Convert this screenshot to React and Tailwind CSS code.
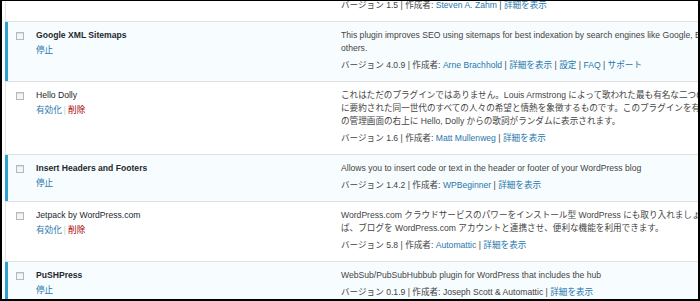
import React from 'react';

// WordPress plugin list, shown at roughly two thirds of its normal size
const plugins = [
  {
    name: "Google XML Sitemaps",
    active: true,
    desc: [
      "This plugin improves SEO using sitemaps for best indexation by search engines like Google, Bing, Yahoo and",
      "others.",
    ],
    version: "4.0.9",
    author: "Arne Brachhold",
    extra: ["設定", "FAQ", "サポート"],
  },
  {
    name: "Hello Dolly",
    active: false,
    desc: [
      "これはただのプラグインではありません。Louis Armstrong によって歌われた最も有名な二つの単語、Hello, Dolly",
      "に要約された同一世代のすべての人々の希望と情熱を象徴するものです。このプラグインを有効にすると、すべて",
      "の管理画面の右上に Hello, Dolly からの歌詞がランダムに表示されます。",
    ],
    version: "1.6",
    author: "Matt Mullenweg",
    extra: [],
  },
  {
    name: "Insert Headers and Footers",
    active: true,
    desc: ["Allows you to insert code or text in the header or footer of your WordPress blog"],
    version: "1.4.2",
    author: "WPBeginner",
    extra: [],
  },
  {
    name: "Jetpack by WordPress.com",
    active: false,
    desc: [
      "WordPress.com クラウドサービスのパワーをインストール型 WordPress にも取り入れましょう。Jetpack を使え",
      "ば、ブログを WordPress.com アカウントと連携させ、便利な機能を利用できます。",
    ],
    version: "5.8",
    author: "Automattic",
    extra: [],
  },
  {
    name: "PuSHPress",
    active: true,
    desc: ["WebSub/PubSubHubbub plugin for WordPress that includes the hub"],
    version: "0.1.9",
    author: "Joseph Scott & Automattic",
    authorPlain: true,
    extra: [],
  },
];

function VersionLine({ version, author, authorPlain, extra = [], className = "" }) {
  return (
    <p className={"whitespace-nowrap leading-[13px] text-[#444] " + className}>
      バージョン {version} | 作成者:{" "}
      {authorPlain ? (
        <span>{author}</span>
      ) : (
        <a className="text-[#1f77ad]">{author}</a>
      )}{" "}
      | <a className="text-[#1f77ad]">詳細を表示</a>
      {extra.map((e) => (
        <span key={e}>
          {" "}| <a className="text-[#1f77ad]">{e}</a>
        </span>
      ))}
    </p>
  );
}

function PluginRow({ p }) {
  return (
    <div
      className={
        "flex border-b border-[#e1e1e1] " +
        (p.active ? "bg-[#f7fcfe]" : "bg-white")
      }
    >
      <div
        className={
          "w-[24px] shrink-0 pl-[11px] pt-[10px] " +
          (p.active ? "shadow-[inset_3px_0_0_#2ea2cc]" : "shadow-[inset_1px_0_0_#e5e5e5]")
        }
      >
        <span className="block h-[8px] w-[8px] border border-[#b4b9be] bg-[#f6f6f6] shadow-[inset_0_1px_1px_rgba(0,0,0,0.1)]" />
      </div>
      <div className="w-[307px] shrink-0 pl-[7px] pt-[7px]">
        <div
          className={
            "leading-[13px] text-[#23282d] " + (p.active ? "font-bold" : "font-normal")
          }
        >
          {p.name}
        </div>
        <div className="mt-[2px] leading-[13px]">
          {p.active ? (
            <a className="text-[#1f77ad]">停止</a>
          ) : (
            <>
              <a className="text-[#1f77ad]">有効化</a>
              <span className="mx-[2px] text-[#ccc]">|</span>
              <a className="text-[#a00]">削除</a>
            </>
          )}
        </div>
      </div>
      <div className="min-w-0 flex-1 pl-[5px] pt-[7px] pb-[9px]">
        <div className="mb-[4px] text-[#444]">
          {p.desc.map((l, i) => (
            <div key={i} className="whitespace-nowrap leading-[13px]">
              {l}
            </div>
          ))}
        </div>
        <VersionLine {...p} />
      </div>
    </div>
  );
}

export default function App() {
  return (
    <div
      className="box-border h-[301px] w-[700px] overflow-hidden border-t border-r-2 border-b-2 border-l-2 border-black bg-white pl-[3px] text-[8.6px]"
      style={{ fontFamily: '"Liberation Sans", "Noto Sans CJK JP", sans-serif' }}
    >
      {/* previous plugin, cut off at the top */}
      <div className="flex border-b border-[#e1e1e1] bg-white shadow-[inset_1px_0_0_#e5e5e5]">
        <div className="w-[331px] shrink-0" />
        <div className="min-w-0 flex-1 pl-[5px] pb-[9px]">
          <VersionLine version="1.5" author="Steven A. Zahm" className="-mt-[2px]" />
        </div>
      </div>
      {plugins.map((p) => (
        <PluginRow key={p.name} p={p} />
      ))}
    </div>
  );
}
